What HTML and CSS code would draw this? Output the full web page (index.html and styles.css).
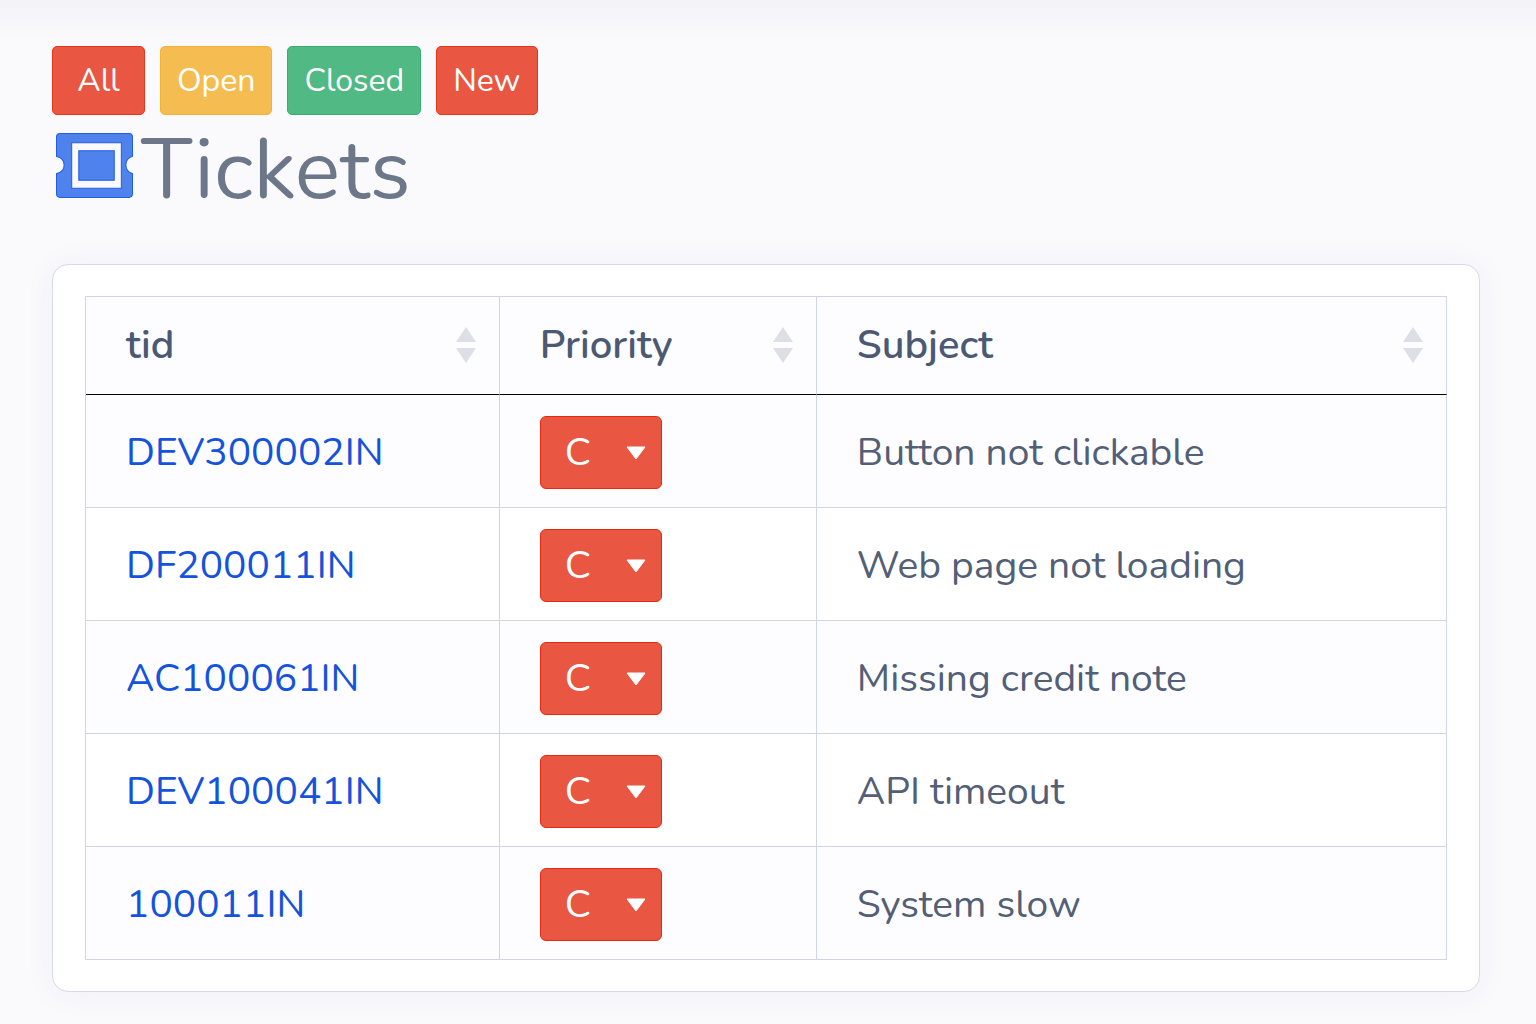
FILE: index.html
```
<!DOCTYPE html>
<html lang="en">

<head>
    <meta charset="UTF-8">
    <meta name="viewport" content="width=device-width, initial-scale=1.0">
    <title>Tickets</title>
    <link rel="stylesheet" href="styles.css">
</head>

<body>
    <!-- shared icons -->
    <svg class="sprite" aria-hidden="true">
        <symbol id="sort" viewBox="0 0 20 36">
            <path d="M10 0L20 15H0zM0 21h20L10 36z" fill="currentColor" />
        </symbol>
    </svg>

    <nav class="filters">
        <button type="button" class="btn btn-danger">All</button>
        <button type="button" class="btn btn-warning">Open</button>
        <button type="button" class="btn btn-success">Closed</button>
        <button type="button" class="btn btn-danger">New</button>
    </nav>

    <h1>
        <svg class="ticket-icon" viewBox="0 0 76 64" aria-hidden="true">
            <path fill="#5082ee" stroke="#1f5ee8" fill-rule="evenodd" d="M4 .5H72Q75.500 .5 75.500 4V23Q69 25 69 31.500T75.500 40V60Q75.500 63.500 72 63.500H4Q.5 63.500 .5 60V40Q8 38.500 8 31.500T.5 23V4Q.5 .5 4 .5zM15.500 9.500V54.500H64.500V9.500zM22.500 17.500H57.500V46.500H22.500z" />
        </svg>
        <span>Tickets</span>
    </h1>

    <div class="card">
        <table>
            <thead>
                <tr>
                    <th class="col-tid"><button type="button" class="sort-btn">tid <svg><use href="#sort" /></svg></button></th>
                    <th class="col-priority"><button type="button" class="sort-btn">Priority <svg><use href="#sort" /></svg></button></th>
                    <th><button type="button" class="sort-btn">Subject <svg><use href="#sort" /></svg></button></th>
                </tr>
            </thead>
            <tbody>
                <tr>
                    <td><a href="#">DEV300002IN</a></td>
                    <td><select class="priority" aria-label="Priority of DEV300002IN"><option>C</option></select></td>
                    <td>Button not clickable</td>
                </tr>
                <tr>
                    <td><a href="#">DF200011IN</a></td>
                    <td><select class="priority" aria-label="Priority of DF200011IN"><option>C</option></select></td>
                    <td>Web page not loading</td>
                </tr>
                <tr>
                    <td><a href="#">AC100061IN</a></td>
                    <td><select class="priority" aria-label="Priority of AC100061IN"><option>C</option></select></td>
                    <td>Missing credit note</td>
                </tr>
                <tr>
                    <td><a href="#">DEV100041IN</a></td>
                    <td><select class="priority" aria-label="Priority of DEV100041IN"><option>C</option></select></td>
                    <td>API timeout</td>
                </tr>
                <tr>
                    <td><a href="#">100011IN</a></td>
                    <td><select class="priority" aria-label="Priority of 100011IN"><option>C</option></select></td>
                    <td>System slow</td>
                </tr>
            </tbody>
        </table>
    </div>
</body>

</html>
```
FILE: styles.css
```
* {
    box-sizing: border-box;
}

body {
    margin: 0;
    padding: 46px 56px 32px 52px;
    min-height: 100vh;
    font-family: Nunito, Lato, sans-serif;
    font-size: 39px;
    color: #525f76;
    background: linear-gradient(#f3f3f8, #fafafd 40px);
}

.sprite {
    display: none;
}

.filters {
    display: flex;
    gap: 15px;
}

.btn {
    min-width: 93px;
    height: 69px;
    padding: 0 16px;
    border: 1px solid;
    border-radius: 5px;
    font-family: inherit;
    font-size: 32px;
    color: #fff;
    cursor: pointer;
}

.btn-danger {
    background-color: #e95641;
    border-color: #e6351c;
}

.btn-warning {
    background-color: #f5bd51;
    border-color: #f3b235;
}

.btn-success {
    background-color: #51b983;
    border-color: #36ae70;
}

h1 {
    display: flex;
    align-items: baseline;
    gap: 8px;
    margin: 0 0 39px;
    padding-left: 4px;
    font-size: 85px;
    line-height: 110px;
    font-weight: 400;
    color: #6c788a;
}

.ticket-icon {
    width: 77px;
    height: 65px;
}

.card {
    padding: 31px 32px;
    background-color: #fff;
    border: 1px solid #d6daea;
    border-radius: 16px;
    box-shadow: 0 2px 32px rgba(60, 60, 110, 0.05);
}

table {
    width: 100%;
    table-layout: fixed;
    border-spacing: 0;
    border-top: 1px solid #d0d4e4;
    border-left: 1px solid #d0d4e4;
}

th,
td {
    padding: 0 40px;
    text-align: left;
    border-right: 1px solid #d0d4e4;
    border-bottom: 1px solid #d0d4e4;
}

th {
    height: 98px;
    padding-right: 23px;
    padding-bottom: 2px;
    background-color: #fdfdff;
    border-bottom-color: #000;
}

td {
    height: 113px;
    padding-top: 3px;
}

tbody tr:nth-child(odd) {
    background-color: #fdfdff;
}

.col-tid {
    width: 30.4%;
}

.col-priority {
    width: 23.3%;
}

.sort-btn {
    display: flex;
    justify-content: space-between;
    align-items: center;
    width: 100%;
    padding: 0;
    border: none;
    background: none;
    font: inherit;
    font-size: 40px;
    font-weight: 600;
    line-height: 52px;
    color: #4b5a72;
    cursor: pointer;
}

.sort-btn svg {
    width: 20px;
    height: 36px;
    color: #dedfe6;
}

a {
    color: #1453dc;
    text-decoration: none;
}

.priority {
    display: block;
    width: 122px;
    height: 73px;
    padding: 0 24px;
    appearance: none;
    border: 1px solid #e8280f;
    border-radius: 6px;
    font-family: inherit;
    font-size: 39px;
    color: #fff;
    background: #e95641 url("data:image/svg+xml,%3Csvg xmlns='http://www.w3.org/2000/svg' viewBox='0 0 20 14'%3E%3Cpath d='M1 1h18L10 13z' fill='white' stroke='white' stroke-linejoin='round'/%3E%3C/svg%3E") no-repeat right 15px center / 20px 14px;
    cursor: pointer;
}
```
